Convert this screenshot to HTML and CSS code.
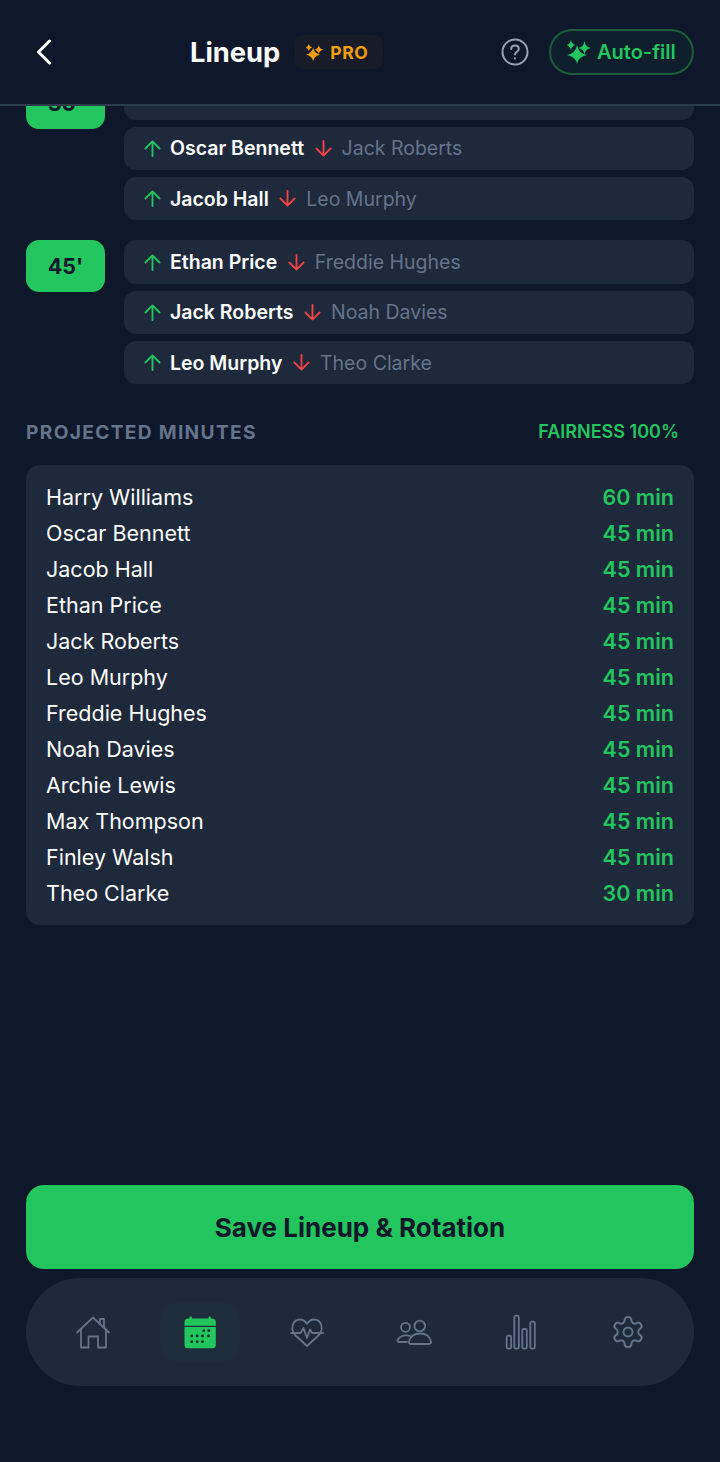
FILE: index.html

```html
<!DOCTYPE html>
<html lang="en">
<head>
    <meta charset="UTF-8">
    <meta name="viewport" content="width=device-width, initial-scale=1.0">
    <title>Lineup</title>
    <link rel="stylesheet" href="styles.css">
</head>
<body>
    <header class="top-bar">
        <button class="back-button" aria-label="Back">
            <svg width="16" height="26" viewBox="0 0 16 26"><path d="M13.5 2 L2.5 13 L13.5 24" fill="none" stroke="#fff" stroke-width="3" stroke-linecap="round" stroke-linejoin="round"/></svg>
        </button>
        <div class="title-group">
            <h1>Lineup</h1>
            <span class="pro-badge">
                <svg width="17" height="17" viewBox="0 0 24 24" fill="#f59e0b"><path d="M10 5 Q11.500 13.500 20 15 Q11.500 16.500 10 24 Q8.500 16.500 0 15 Q8.500 13.500 10 5Z"/><path d="M4 0 Q4.800 4.200 8.500 5 Q4.800 5.800 4 10 Q3.200 5.800 -0.500 5 Q3.200 4.200 4 0Z"/><path d="M18 1 Q18.800 7.200 24.500 8 Q18.800 8.800 18 14.500 Q17.200 8.800 11.500 8 Q17.200 7.200 18 1Z"/></svg>
                PRO
            </span>
        </div>
        <svg class="help-icon" width="28" height="28" viewBox="0 0 28 28" fill="none" stroke="#94a3b8" stroke-width="2" stroke-linecap="round"><circle cx="14" cy="14" r="12.5"/><path d="M10.2 11 C10.2 8.8 12 7.5 14 7.5 C16.2 7.5 17.8 9 17.8 10.9 C17.8 13.6 14 13.8 14 16.6"/><path d="M14 20.3 V20.4"/></svg>
        <button class="autofill-button">
            <svg width="24" height="24" viewBox="0 0 24 24" fill="#22c55e"><path d="M10 5 Q11.500 13.500 20 15 Q11.500 16.500 10 24 Q8.500 16.500 0 15 Q8.500 13.500 10 5Z"/><path d="M4 0 Q4.800 4.200 8.500 5 Q4.800 5.800 4 10 Q3.200 5.800 -0.500 5 Q3.200 4.200 4 0Z"/><path d="M17.500 1 Q18.300 7.200 24 8 Q18.300 8.800 17.500 14.500 Q16.700 8.800 11 8 Q16.700 7.200 17.500 1Z"/></svg>
            Auto-fill
        </button>
    </header>

    <main class="scroll-area">
        <div class="scroll-content">
            <section class="sub-group">
                <div class="minute-badge">30'</div>
                <div class="sub-rows">
                    <div class="sub-row"></div>
                    <div class="sub-row">
                        <svg class="arrow" viewBox="0 0 18 18"><path class="arrow-in" d="M9 17V1.5 M1.5 9 L9 1.5 L16.5 9"/></svg>
                        <span class="player-in">Oscar Bennett</span>
                        <svg class="arrow" viewBox="0 0 18 18"><path class="arrow-out" d="M9 1V16.5 M1.5 9 L9 16.5 L16.5 9"/></svg>
                        <span class="player-out">Jack Roberts</span>
                    </div>
                    <div class="sub-row">
                        <svg class="arrow" viewBox="0 0 18 18"><path class="arrow-in" d="M9 17V1.5 M1.5 9 L9 1.5 L16.5 9"/></svg>
                        <span class="player-in">Jacob Hall</span>
                        <svg class="arrow" viewBox="0 0 18 18"><path class="arrow-out" d="M9 1V16.5 M1.5 9 L9 16.5 L16.5 9"/></svg>
                        <span class="player-out">Leo Murphy</span>
                    </div>
                </div>
            </section>

            <section class="sub-group">
                <div class="minute-badge">45'</div>
                <div class="sub-rows">
                    <div class="sub-row">
                        <svg class="arrow" viewBox="0 0 18 18"><path class="arrow-in" d="M9 17V1.5 M1.5 9 L9 1.5 L16.5 9"/></svg>
                        <span class="player-in">Ethan Price</span>
                        <svg class="arrow" viewBox="0 0 18 18"><path class="arrow-out" d="M9 1V16.5 M1.5 9 L9 16.5 L16.5 9"/></svg>
                        <span class="player-out">Freddie Hughes</span>
                    </div>
                    <div class="sub-row">
                        <svg class="arrow" viewBox="0 0 18 18"><path class="arrow-in" d="M9 17V1.5 M1.5 9 L9 1.5 L16.5 9"/></svg>
                        <span class="player-in">Jack Roberts</span>
                        <svg class="arrow" viewBox="0 0 18 18"><path class="arrow-out" d="M9 1V16.5 M1.5 9 L9 16.5 L16.5 9"/></svg>
                        <span class="player-out">Noah Davies</span>
                    </div>
                    <div class="sub-row">
                        <svg class="arrow" viewBox="0 0 18 18"><path class="arrow-in" d="M9 17V1.5 M1.5 9 L9 1.5 L16.5 9"/></svg>
                        <span class="player-in">Leo Murphy</span>
                        <svg class="arrow" viewBox="0 0 18 18"><path class="arrow-out" d="M9 1V16.5 M1.5 9 L9 16.5 L16.5 9"/></svg>
                        <span class="player-out">Theo Clarke</span>
                    </div>
                </div>
            </section>

            <div class="minutes-header">
                <h2>PROJECTED MINUTES</h2>
                <span class="fairness">FAIRNESS 100%</span>
            </div>

            <div class="minutes-card">
                <div class="minutes-row"><span>Harry Williams</span><b>60 min</b></div>
                <div class="minutes-row"><span>Oscar Bennett</span><b>45 min</b></div>
                <div class="minutes-row"><span>Jacob Hall</span><b>45 min</b></div>
                <div class="minutes-row"><span>Ethan Price</span><b>45 min</b></div>
                <div class="minutes-row"><span>Jack Roberts</span><b>45 min</b></div>
                <div class="minutes-row"><span>Leo Murphy</span><b>45 min</b></div>
                <div class="minutes-row"><span>Freddie Hughes</span><b>45 min</b></div>
                <div class="minutes-row"><span>Noah Davies</span><b>45 min</b></div>
                <div class="minutes-row"><span>Archie Lewis</span><b>45 min</b></div>
                <div class="minutes-row"><span>Max Thompson</span><b>45 min</b></div>
                <div class="minutes-row"><span>Finley Walsh</span><b>45 min</b></div>
                <div class="minutes-row"><span>Theo Clarke</span><b>30 min</b></div>
            </div>
        </div>
    </main>

    <div class="bottom-area">
        <button class="save-button">Save Lineup &amp; Rotation</button>
        <nav class="bottom-nav">
            <a class="nav-item">
                <svg class="nav-icon" viewBox="0 0 36 36"><path d="M2 18.5 L18 3.5 L34 18.5"/><path d="M6 15.5 V33.5 H13.5 V22.5 H23 V33.5 H31 V15.5"/><path d="M25 9.5 V5 H29 V13"/></svg>
            </a>
            <a class="nav-item active">
                <svg class="nav-icon-fill" viewBox="0 0 36 36">
                    <path fill="#22c55e" d="M2.500 11.800 V8 C2.500 6 4 4.500 6 4.500 H7.500 V3.500 C7.500 2 10 2 10 3.500 V4.500 H26.500 V3.500 C26.500 2 29 2 29 3.500 V4.500 H30.300 C32.300 4.500 33.800 6 33.800 8 V11.800 Z"/>
                    <path fill="#22c55e" d="M2.500 13 H33.800 V31 C33.800 33 32.500 34.300 30.500 34.300 H5.800 C3.800 34.300 2.500 33 2.500 31 Z"/>
                    <g fill="#123524"><circle cx="21.800" cy="16.700" r="1.400"/><circle cx="26.800" cy="16.700" r="1.400"/><circle cx="9.800" cy="22" r="1.400"/><circle cx="15.200" cy="22" r="1.400"/><circle cx="20.500" cy="22" r="1.400"/><circle cx="26.500" cy="22" r="1.400"/><circle cx="9.800" cy="27.700" r="1.400"/><circle cx="15.200" cy="27.700" r="1.400"/><circle cx="20.500" cy="27.700" r="1.400"/></g>
                </svg>
            </a>
            <a class="nav-item">
                <svg class="nav-icon" viewBox="0 0 36 36"><path d="M18 32 L6 21 C1 15 3.500 5.500 11 5.500 C14 5.500 16.500 7.500 18 10 C19.500 7.500 22 5.500 25 5.500 C32.500 5.500 35 15 30 21 Z"/><path d="M2 19 H11.500 L14.500 14 L18 24 L21 15.500 L23 19 H34"/></svg>
            </a>
            <a class="nav-item">
                <svg class="nav-icon" viewBox="0 0 36 36"><circle cx="9.500" cy="13.300" r="4.500"/><circle cx="23.800" cy="12" r="5.300"/><path d="M14.500 30 H33 C34.500 30 35.300 29 35 27.500 C33.800 22.500 29.500 19.500 24 19.500 C18.500 19.500 14.300 22.500 13 27.500 C12.700 29 13.300 30 14.500 30 Z"/><path d="M11 28 H3 C1.500 28 1 26.800 1.800 25.500 C3.500 22.800 6.500 21.300 10 21.300 C11.500 21.300 12.800 21.500 14 22"/></svg>
            </a>
            <a class="nav-item">
                <svg class="nav-icon" viewBox="0 0 36 36"><rect x="3.700" y="21.700" width="4.500" height="13" rx="1.500"/><rect x="11.300" y="1.700" width="4.500" height="33" rx="1.500"/><rect x="19.300" y="15" width="4.500" height="19.700" rx="1.500"/><rect x="27.300" y="7.700" width="4.500" height="27" rx="1.500"/></svg>
            </a>
            <a class="nav-item">
                <svg class="nav-icon nav-icon-gear" viewBox="0 0 24 24"><path d="M12.220 2h-.44a2 2 0 0 0-2 2v.18a2 2 0 0 1-1 1.730l-.43.25a2 2 0 0 1-2 0l-.15-.08a2 2 0 0 0-2.730.73l-.22.38a2 2 0 0 0 .73 2.730l.15.1a2 2 0 0 1 1 1.720v.51a2 2 0 0 1-1 1.740l-.15.09a2 2 0 0 0-.73 2.730l.22.38a2 2 0 0 0 2.730.73l.15-.08a2 2 0 0 1 2 0l.43.25a2 2 0 0 1 1 1.730V20a2 2 0 0 0 2 2h.44a2 2 0 0 0 2-2v-.18a2 2 0 0 1 1-1.730l.43-.25a2 2 0 0 1 2 0l.15.08a2 2 0 0 0 2.730-.73l.22-.39a2 2 0 0 0-.73-2.730l-.15-.08a2 2 0 0 1-1-1.740v-.5a2 2 0 0 1 1-1.740l.15-.09a2 2 0 0 0 .73-2.730l-.22-.38a2 2 0 0 0-2.730-.73l-.15.08a2 2 0 0 1-2 0l-.43-.25a2 2 0 0 1-1-1.730V4a2 2 0 0 0-2-2z"/><circle cx="12" cy="12" r="3"/></svg>
            </a>
        </nav>
    </div>
</body>
</html>
```

FILE: styles.css

```css
* {
    box-sizing: border-box;
}
body {
    font-family: Inter, 'Noto Sans', sans-serif;
    background-color: #0f172a;
    color: white;
    margin: 0;
    height: 1462px;
    display: flex;
    flex-direction: column;
    overflow: hidden;
}
button {
    font-family: inherit;
    border: none;
    background: none;
    color: inherit;
    padding: 0;
}

/* barra superior */
.top-bar {
    height: 106px;
    flex-shrink: 0;
    display: flex;
    align-items: center;
    padding: 0 26px 0 36px;
    border-bottom: 2px solid #2c3a4d;
}
.back-button {
    display: flex;
    width: 154px;
}
.title-group {
    display: flex;
    align-items: center;
    gap: 15px;
}
.title-group h1 {
    font-size: 27.3px;
    font-weight: 700;
    margin: 0;
    padding-top: 1px;
}
.pro-badge {
    display: flex;
    align-items: center;
    gap: 7px;
    height: 34px;
    padding: 0 15px 0 11px;
    border-radius: 8px;
    background-color: rgba(245, 158, 11, 0.035);
    color: #f59e0b;
    font-size: 17.5px;
    font-weight: 700;
    letter-spacing: 0.6px;
}
.help-icon {
    margin-left: auto;
    margin-right: 20px;
}
.autofill-button {
    display: flex;
    align-items: center;
    gap: 6px;
    width: 145px;
    height: 46px;
    padding-left: 16px;
    border: 2px solid #1b5c3b;
    border-radius: 23px;
    background-color: rgba(34, 197, 94, 0.04);
    color: #22c55e;
    font-size: 20px;
    font-weight: 600;
}

/* zona con scroll */
.scroll-area {
    flex: 1;
    overflow: hidden;
}
.scroll-content {
    margin-top: -29.5px;
    padding: 0 26px;
}
.sub-group {
    display: flex;
    gap: 19px;
    margin-bottom: 20px;
}
.minute-badge {
    flex-shrink: 0;
    width: 79px;
    height: 52px;
    display: flex;
    align-items: center;
    justify-content: center;
    background-color: #22c55e;
    border-radius: 13px;
    color: #0f172a;
    font-size: 21.5px;
    font-weight: 700;
}
.sub-rows {
    flex: 1;
    display: flex;
    flex-direction: column;
    gap: 7px;
}
.sub-row {
    height: 43.33px;
    display: flex;
    align-items: center;
    padding-left: 20px;
    background-color: #1e293b;
    border-radius: 12px;
}
.arrow {
    width: 17px;
    height: 17px;
    flex-shrink: 0;
}
.arrow path {
    fill: none;
    stroke-width: 2;
    stroke-linecap: round;
    stroke-linejoin: round;
}
.arrow-in {
    stroke: #22c55e;
}
.arrow-out {
    stroke: #ef4444;
}
.player-in {
    margin: 0 10.5px 0 9px;
    font-size: 19.5px;
    font-weight: 600;
}
.player-out {
    margin-left: 10px;
    color: #64748b;
    font-size: 19.5px;
}
.minutes-header {
    display: flex;
    justify-content: space-between;
    align-items: center;
    margin-top: 35.5px;
    padding-right: 15px;
}
.minutes-header h2 {
    margin: 0;
    color: #64748b;
    font-size: 19.2px;
    font-weight: 700;
    letter-spacing: 1.3px;
}
.fairness {
    color: #22c55e;
    font-size: 18px;
    font-weight: 600;
}
.minutes-card {
    margin-top: 21px;
    padding: 14px 20px;
    background-color: #1e293b;
    border-radius: 14px;
}
.minutes-row {
    height: 36px;
    display: flex;
    justify-content: space-between;
    align-items: center;
    font-size: 21.5px;
}
.minutes-row b {
    color: #22c55e;
    font-weight: 600;
}

/* parte inferior */
.bottom-area {
    flex-shrink: 0;
    padding: 0 26px 76px;
}
.save-button {
    display: block;
    width: 100%;
    height: 84px;
    background-color: #22c55e;
    border-radius: 18px;
    color: #0f172a;
    font-size: 26px;
    font-weight: 700;
}
.bottom-nav {
    margin-top: 9px;
    height: 108px;
    padding: 0 13px;
    display: flex;
    align-items: center;
    background-color: #1e293b;
    border-radius: 54px;
}
.nav-item {
    flex: 0 0 107px;
    display: flex;
    align-items: center;
    justify-content: center;
}
.nav-item.active {
    flex: 0 0 80px;
    height: 58px;
    margin: 0 13.5px;
    border-radius: 16px;
    background-color: rgba(34, 197, 94, 0.025);
}
.nav-icon,
.nav-icon-fill {
    width: 36px;
    height: 36px;
}
.nav-icon {
    fill: none;
    stroke: #64748b;
    stroke-width: 1.8;
    stroke-linecap: round;
    stroke-linejoin: round;
}
.nav-icon-gear {
    stroke-width: 1.3;
}
```
